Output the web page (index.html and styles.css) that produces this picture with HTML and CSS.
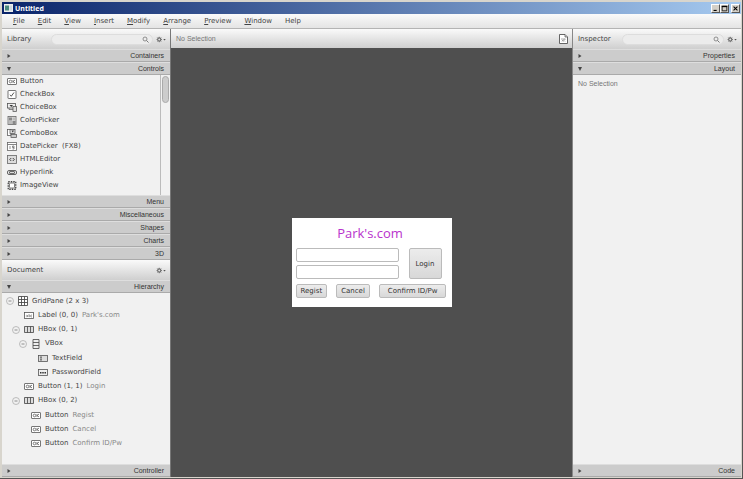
FILE: index.html
```
<!DOCTYPE html>
<html lang="en">
<head>
    <meta charset="UTF-8">
    <meta name="viewport" content="width=device-width, initial-scale=1.0">
    <title>Untitled</title>
    <link rel="stylesheet" href="styles.css">
</head>
<body>
    <!-- Icons -->
    <svg class="sprite" aria-hidden="true">
        <symbol id="i-button" viewBox="0 0 20 14"><rect x="1" y="1" width="18" height="12" rx="1" fill="#fff" stroke="#555" stroke-width="1.6"/><circle cx="7" cy="7" r="2.6" fill="none" stroke="#555" stroke-width="1.5"/><path d="M12 4v6M16 4l-3.5 3L16 10" fill="none" stroke="#555" stroke-width="1.5"/></symbol>
        <symbol id="i-check" viewBox="0 0 18 18"><rect x="1" y="1" width="16" height="16" rx="1" fill="#fff" stroke="#666" stroke-width="1.8"/><path d="M5 9.500l2.500 3L13 5" fill="none" stroke="#444" stroke-width="1.8"/></symbol>
        <symbol id="i-choice" viewBox="0 0 20 18"><rect x="1" y="1" width="16" height="9" fill="#eee" stroke="#555" stroke-width="1.6"/><path d="M5 4h7l-3.500 4z" fill="#333"/><path d="M4 10v3h8" fill="none" stroke="#555" stroke-width="1.400"/><rect x="12" y="7" width="7" height="10" fill="#ddd" stroke="#555" stroke-width="1.500"/></symbol>
        <symbol id="i-color" viewBox="0 0 18 18"><rect x="1" y="1" width="16" height="16" fill="#ddd" stroke="#666" stroke-width="1.6"/><path d="M3 3h6v6H3zM10 10h6v6h-6z" fill="#888"/><path d="M10 3h6v6h-6zM3 10h6v6H3z" fill="#bbb"/></symbol>
        <symbol id="i-combo" viewBox="0 0 20 18"><rect x="1" y="1" width="7" height="12" fill="#fff" stroke="#555" stroke-width="1.500"/><rect x="6" y="1" width="10" height="8" fill="#ddd" stroke="#555" stroke-width="1.500"/><path d="M9 3h5l-2.500 4z" fill="#333"/><rect x="8" y="11" width="11" height="6" fill="#ccc" stroke="#555" stroke-width="1.500"/></symbol>
        <symbol id="i-date" viewBox="0 0 20 18"><rect x="1" y="1" width="18" height="16" fill="#fff" stroke="#666" stroke-width="1.600"/><path d="M1 5h18" stroke="#666" stroke-width="1.600"/><path d="M6 8v6M11 8v3h3M14 8h-3M14 8v6h-3" fill="none" stroke="#555" stroke-width="1.300"/></symbol>
        <symbol id="i-html" viewBox="0 0 20 18"><rect x="1" y="1" width="18" height="16" fill="#ddd" stroke="#666" stroke-width="1.600"/><path d="M8.500 6L5.500 9l3 3M11.500 6l3 3-3 3" fill="none" stroke="#333" stroke-width="1.800"/></symbol>
        <symbol id="i-link" viewBox="0 0 20 14"><rect x="1" y="3" width="18" height="8" rx="3" fill="#eee" stroke="#555" stroke-width="1.800"/><rect x="5" y="5" width="10" height="4" rx="1" fill="#ddd" stroke="#444" stroke-width="1.500"/></symbol>
        <symbol id="i-image" viewBox="0 0 18 18"><rect x="1.500" y="1.500" width="15" height="15" fill="none" stroke="#444" stroke-width="2.600" stroke-dasharray="3 2"/><rect x="4" y="4" width="10" height="10" rx="2" fill="#fff" stroke="#555" stroke-width="1.500"/></symbol>
        <symbol id="i-grid" viewBox="0 0 20 20"><path d="M1 1h18v18H1zM7 1v18M13 1v18M1 7h18M1 13h18" fill="#fff" stroke="#444" stroke-width="1.700"/></symbol>
        <symbol id="i-label" viewBox="0 0 20 14"><rect x="1" y="1" width="18" height="12" fill="#fff" stroke="#555" stroke-width="1.600"/><path d="M7 6v4M10 4v6M16 6h-2v4h2" fill="none" stroke="#777" stroke-width="1.200"/><circle cx="5.500" cy="8" r="1.500" fill="none" stroke="#777"/><circle cx="11.500" cy="8" r="1.500" fill="none" stroke="#777"/></symbol>
        <symbol id="i-hbox" viewBox="0 0 20 14"><path d="M1 1h18v12H1zM7 1v12M13 1v12" fill="#ddd" stroke="#444" stroke-width="1.600"/></symbol>
        <symbol id="i-vbox" viewBox="0 0 14 20"><path d="M1 1h12v18H1zM1 7h12M1 13h12" fill="#eee" stroke="#444" stroke-width="1.600"/></symbol>
        <symbol id="i-text" viewBox="0 0 20 14"><rect x="1" y="1" width="18" height="12" fill="#ddd" stroke="#555" stroke-width="1.600"/><path d="M4 4h4M6 4v6M4 10h4" stroke="#333" stroke-width="1.300"/></symbol>
        <symbol id="i-pass" viewBox="0 0 20 14"><rect x="1" y="1" width="18" height="12" fill="#eee" stroke="#555" stroke-width="1.600"/><path d="M4 6h3v3H4zM8.500 6h3v3h-3zM13 6h3v3h-3z" fill="#333"/></symbol>
        <symbol id="i-minus" viewBox="0 0 16 16"><circle cx="8" cy="8" r="7" fill="none" stroke="#aaa" stroke-width="1.500"/><path d="M5 8h6" stroke="#777" stroke-width="1.600"/></symbol>
        <symbol id="i-search" viewBox="0 0 14 14"><circle cx="6" cy="6" r="4" fill="none" stroke="#777" stroke-width="1.600"/><path d="M9 9l4 4" stroke="#777" stroke-width="2"/></symbol>
        <symbol id="i-gear" viewBox="0 0 20 14"><circle cx="6.500" cy="7" r="3.200" fill="none" stroke="#666" stroke-width="2.200"/><path d="M6.500 1.500v2M6.500 10.500v2M1 7h2M10 7h2M2.600 3.100l1.400 1.400M9 9.500l1.400 1.400M2.600 10.900L4 9.500M9 4.500l1.400-1.400" stroke="#666" stroke-width="1.500"/><path d="M14.500 6h5L17 9z" fill="#555"/></symbol>
        <symbol id="i-page" viewBox="0 0 18 20"><path d="M1 1h11l5 5v13H1z" fill="#fff" stroke="#555" stroke-width="1.800"/><path d="M12 1v5h5" fill="#ccc" stroke="#555" stroke-width="1.400"/><path d="M5 8l7 7M5 11l4 4M9 8l4 4M12 9l-6 6" stroke="#888" stroke-width="1.400"/></symbol>
        <symbol id="i-right" viewBox="0 0 8 8"><path d="M1 0l6 4-6 4z" fill="#444"/></symbol>
        <symbol id="i-down" viewBox="0 0 8 8"><path d="M0 0h8L4 8z" fill="#444"/></symbol>
    </svg>

    <div class="window">
        <header class="title-bar">
            <svg class="app-icon" viewBox="0 0 18 16"><path d="M0 0h18v16H0z" fill="#eee"/><path d="M2 3h8v10H2z" fill="#4b8a80"/><path d="M11 3h5v10h-5z" fill="#ccd8df"/></svg>
            <span class="title">Untitled</span>
            <button class="win-btn" aria-label="Minimize"><svg viewBox="0 0 9 9"><path d="M2 7h4" stroke="#000" stroke-width="1.500"/></svg></button>
            <button class="win-btn" aria-label="Maximize"><svg viewBox="0 0 9 9"><path d="M1.500 1.500h6v6h-6z" fill="none" stroke="#000"/><path d="M1 2h7" stroke="#000" stroke-width="1.500"/></svg></button>
            <button class="win-btn close" aria-label="Close"><svg viewBox="0 0 9 9"><path d="M2 2l5 5M7 2L2 7" stroke="#000" stroke-width="1.300"/></svg></button>
        </header>

        <nav class="menu-bar">
            <button><u>F</u>ile</button>
            <button><u>E</u>dit</button>
            <button><u>V</u>iew</button>
            <button><u>I</u>nsert</button>
            <button><u>M</u>odify</button>
            <button><u>A</u>rrange</button>
            <button><u>P</u>review</button>
            <button><u>W</u>indow</button>
            <button>Help</button>
        </nav>

        <main class="workspace">
            <aside class="panel">
                <div class="panel-head">
                    <span>Library</span>
                    <label class="search"><input type="text" aria-label="Search library"><svg><use href="#i-search"/></svg></label>
                    <button class="gear" aria-label="Library options"><svg><use href="#i-gear"/></svg></button>
                </div>
                <button class="section"><svg><use href="#i-right"/></svg>Containers</button>
                <button class="section"><svg><use href="#i-down"/></svg>Controls</button>
                <div class="library">
                    <ul class="controls">
                        <li><svg><use href="#i-button"/></svg>Button</li>
                        <li><svg><use href="#i-check"/></svg>CheckBox</li>
                        <li><svg><use href="#i-choice"/></svg>ChoiceBox</li>
                        <li><svg><use href="#i-color"/></svg>ColorPicker</li>
                        <li><svg><use href="#i-combo"/></svg>ComboBox</li>
                        <li><svg><use href="#i-date"/></svg>DatePicker &nbsp;(FX8)</li>
                        <li><svg><use href="#i-html"/></svg>HTMLEditor</li>
                        <li><svg><use href="#i-link"/></svg>Hyperlink</li>
                        <li><svg><use href="#i-image"/></svg>ImageView</li>
                    </ul>
                    <div class="scrollbar"><div class="thumb"></div></div>
                </div>
                <button class="section"><svg><use href="#i-right"/></svg>Menu</button>
                <button class="section"><svg><use href="#i-right"/></svg>Miscellaneous</button>
                <button class="section"><svg><use href="#i-right"/></svg>Shapes</button>
                <button class="section"><svg><use href="#i-right"/></svg>Charts</button>
                <button class="section"><svg><use href="#i-right"/></svg>3D</button>

                <div class="panel-head">
                    <span>Document</span>
                    <button class="gear" aria-label="Document options"><svg><use href="#i-gear"/></svg></button>
                </div>
                <button class="section"><svg><use href="#i-down"/></svg>Hierarchy</button>
                <ul class="tree">
                    <li><button class="toggle" aria-label="Collapse"><svg><use href="#i-minus"/></svg></button><svg class="big"><use href="#i-grid"/></svg>GridPane (2 x 3)</li>
                    <li class="leaf level-1"><svg><use href="#i-label"/></svg>Label (0, 0) <span>Park's.com</span></li>
                    <li class="level-1"><button class="toggle" aria-label="Collapse"><svg><use href="#i-minus"/></svg></button><svg><use href="#i-hbox"/></svg>HBox (0, 1)</li>
                    <li class="level-2"><button class="toggle" aria-label="Collapse"><svg><use href="#i-minus"/></svg></button><svg class="big"><use href="#i-vbox"/></svg>VBox</li>
                    <li class="leaf level-3"><svg><use href="#i-text"/></svg>TextField</li>
                    <li class="leaf level-3"><svg><use href="#i-pass"/></svg>PasswordField</li>
                    <li class="leaf level-1"><svg><use href="#i-button"/></svg>Button (1, 1) <span>Login</span></li>
                    <li class="level-1"><button class="toggle" aria-label="Collapse"><svg><use href="#i-minus"/></svg></button><svg><use href="#i-hbox"/></svg>HBox (0, 2)</li>
                    <li class="leaf level-2"><svg><use href="#i-button"/></svg>Button <span>Regist</span></li>
                    <li class="leaf level-2"><svg><use href="#i-button"/></svg>Button <span>Cancel</span></li>
                    <li class="leaf level-2"><svg><use href="#i-button"/></svg>Button <span>Confirm ID/Pw</span></li>
                </ul>
                <button class="section"><svg><use href="#i-right"/></svg>Controller</button>
            </aside>

            <section class="editor">
                <div class="editor-head">
                    <span class="muted">No Selection</span>
                    <svg class="page-icon"><use href="#i-page"/></svg>
                </div>
                <div class="canvas">
                    <form class="login">
                        <h1>Park's.com</h1>
                        <div class="fields">
                            <input type="text" aria-label="ID">
                            <input type="password" aria-label="Password">
                        </div>
                        <button type="button" class="fx-btn login-btn">Login</button>
                        <div class="actions">
                            <button type="button" class="fx-btn">Regist</button>
                            <button type="button" class="fx-btn">Cancel</button>
                            <button type="button" class="fx-btn wide">Confirm ID/Pw</button>
                        </div>
                    </form>
                </div>
            </section>

            <aside class="panel inspector">
                <div class="panel-head">
                    <span>Inspector</span>
                    <label class="search"><input type="text" aria-label="Search inspector"><svg><use href="#i-search"/></svg></label>
                    <button class="gear" aria-label="Inspector options"><svg><use href="#i-gear"/></svg></button>
                </div>
                <button class="section"><svg><use href="#i-right"/></svg>Properties</button>
                <button class="section"><svg><use href="#i-down"/></svg>Layout</button>
                <p class="muted empty">No Selection</p>
                <button class="section"><svg><use href="#i-right"/></svg>Code</button>
            </aside>
        </main>
    </div>
</body>
</html>
```
FILE: styles.css
```
* {
    box-sizing: border-box;
}
body {
    margin: 0;
    font-family: "DejaVu Sans", sans-serif;
    font-size: 7px;
    line-height: 13px;
    color: #444;
    background-color: #d8d5cd;
}
button, input {
    font: inherit;
    color: inherit;
    margin: 0;
    padding: 0;
    border: none;
    background: none;
}
ul {
    list-style: none;
    margin: 0;
    padding: 0;
}
svg {
    flex: none;
    display: block;
}
.sprite {
    position: absolute;
    width: 0;
    height: 0;
}
.window {
    display: flex;
    flex-direction: column;
    height: 100vh;
    padding: 2px 1px 1px 2px;
    border-right: 1px solid #555;
    border-bottom: 1px solid #555;
}

/* Title bar and menu */
.title-bar {
    display: flex;
    align-items: center;
    height: 12px;
    padding: 0 1px;
    background: linear-gradient(to right, #0a246a, #a6caf0);
}
.app-icon {
    width: 9px;
    height: 8px;
    margin-left: 1px;
}
.title {
    flex: 1;
    margin-left: 2px;
    font-family: "Open Sans", sans-serif;
    font-weight: bold;
    color: #fff;
}
.win-btn {
    width: 9px;
    height: 9px;
    background-color: #d4d0c8;
    border: 1px solid #fff;
    border-right-color: #555;
    border-bottom-color: #555;
}
.win-btn svg {
    width: 7px;
    height: 7px;
}
.close {
    margin-left: 2px;
}
.menu-bar {
    display: flex;
    gap: 13px;
    height: 15px;
    padding: 0 11px;
    background: linear-gradient(#fafafa, #e4e4e4);
    border-bottom: 1px solid #b4b4b4;
}

/* Panels */
.workspace {
    flex: 1;
    display: grid;
    grid-template-columns: 169px 1fr 169px;
    min-height: 0;
}
.panel {
    display: flex;
    flex-direction: column;
    min-height: 0;
    background-color: #f1f1f1;
    border-right: 1px solid #777;
}
.inspector {
    border-right: none;
    border-left: 1px solid #888;
}
.panel-head,
.editor-head {
    flex: none;
    display: flex;
    align-items: center;
    justify-content: space-between;
    height: 20px;
    padding: 0 4px 0 5px;
    background: linear-gradient(#fafafa, #cfcfcf);
}
.editor-head {
    height: 19px;
}
.search {
    display: flex;
    align-items: center;
    width: 102px;
    height: 11px;
    margin-left: auto;
    margin-right: 3px;
    padding-right: 3px;
    background-color: #ececec;
    border: 1px solid #ddd;
    border-radius: 6px;
}
.search input {
    flex: 1;
    min-width: 0;
    outline: none;
}
.search svg {
    width: 7px;
    height: 7px;
}
.gear svg {
    width: 10px;
    height: 7px;
}
.section {
    flex: none;
    display: flex;
    align-items: center;
    justify-content: space-between;
    height: 13px;
    padding: 0 6px 0 5px;
    font-family: "Liberation Sans", sans-serif;
    color: #333;
    background-color: #ccc;
    border-top: 1px solid #dedede;
    border-bottom: 1px solid #aaa;
}
.section svg {
    width: 4px;
    height: 4px;
}
.library {
    flex: none;
    display: flex;
    height: 120px;
    overflow: hidden;
}
.controls {
    flex: 1;
}
.controls li {
    display: flex;
    align-items: center;
    gap: 3px;
    height: 13px;
    padding-left: 5px;
}
.controls svg {
    width: 10px;
    height: 9px;
}
.scrollbar {
    width: 10px;
    padding: 1px;
    border-left: 1px solid #bbb;
}
.thumb {
    height: 27px;
    background-color: #ccc;
    border: 1px solid #aaa;
    border-radius: 4px;
}

/* Hierarchy */
.tree {
    flex: 1;
    display: flex;
    flex-direction: column;
    min-height: 0;
    padding: 1px 0 13px;
}
.tree li {
    flex: 1;
    display: flex;
    align-items: center;
    gap: 4px;
    padding-left: 4px;
}
.tree .level-1 {
    padding-left: 10px;
}
.tree .leaf.level-1 {
    padding-left: 22px;
}
.tree .level-2 {
    padding-left: 17px;
}
.tree .leaf.level-2 {
    padding-left: 29px;
}
.tree .leaf.level-3 {
    padding-left: 36px;
}
.tree svg {
    width: 10px;
    height: 7px;
}
.tree svg.big {
    height: 10px;
}
.tree .toggle svg {
    width: 8px;
    height: 8px;
}
.tree span {
    color: #888;
}

/* Editor */
.editor {
    display: flex;
    flex-direction: column;
    min-width: 0;
}
.muted {
    font-family: "Liberation Sans", sans-serif;
    color: #777;
}
.page-icon {
    width: 9px;
    height: 10px;
}
.canvas {
    flex: 1;
    display: flex;
    align-items: center;
    justify-content: center;
    background-color: #4f4f4f;
}
.empty {
    flex: 1;
    margin: 0;
    padding: 2px 5px;
}
.login {
    display: grid;
    grid-template-columns: 103px 36px;
    column-gap: 10px;
    padding: 4px 7px 9px 4px;
    background-color: #fff;
}
.login h1 {
    grid-column: 1 / -1;
    margin: 0;
    font-family: "Open Sans", sans-serif;
    font-size: 13px;
    font-weight: normal;
    line-height: 22px;
    text-align: center;
    color: #b832cc;
}
.fields {
    display: flex;
    flex-direction: column;
    gap: 3px;
    margin-top: 4px;
}
.fields input {
    width: 100%;
    height: 14px;
    background-color: #fff;
    border: 1px solid #bbb;
    border-radius: 2px;
}
.fx-btn {
    height: 14px;
    padding: 0 4px;
    line-height: 12px;
    color: #333;
    background: linear-gradient(#ececec, #d8d8d8);
    border: 1px solid #bbb;
    border-radius: 2px;
}
.login-btn {
    justify-self: start;
    width: 33px;
    height: 31px;
    margin-top: 4px;
}
.actions {
    grid-column: 1 / -1;
    display: flex;
    gap: 9px;
    margin-top: 5px;
    white-space: nowrap;
}
.wide {
    padding: 0 8px;
}
```
